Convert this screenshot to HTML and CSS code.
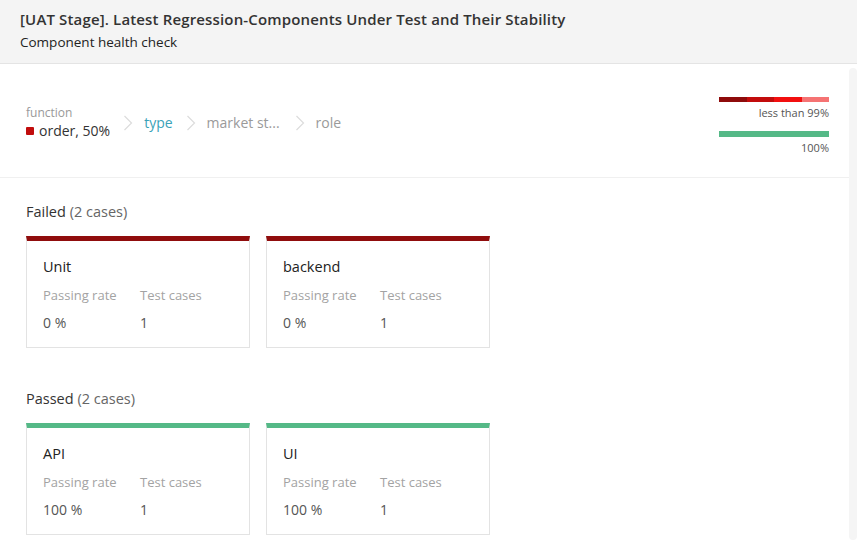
FILE: index.html
```html
<!DOCTYPE html>
<html>
<head>
<meta charset="utf-8">
<link rel="stylesheet" href="styles.css">
</head>
<body>
<header class="header">
  <h1 class="title">[UAT Stage]. Latest Regression-Components Under Test and Their Stability</h1>
  <p class="subtitle">Component health check</p>
</header>
<div class="body-row">
  <main class="main">
    <div class="filter">
      <div class="crumbs">
        <div class="crumb-first">
          <div class="crumb-label">function</div>
          <div class="crumb-value"><span class="dot"></span>order, 50%</div>
        </div>
        <svg class="chev" width="10" height="16" viewBox="0 0 10 16"><path d="M1.5 1 L8.5 8 L1.5 15" fill="none" stroke="#dcdcdc" stroke-width="1.2"/></svg>
        <span class="crumb active">type</span>
        <svg class="chev" width="10" height="16" viewBox="0 0 10 16"><path d="M1.5 1 L8.5 8 L1.5 15" fill="none" stroke="#dcdcdc" stroke-width="1.2"/></svg>
        <span class="crumb">market st...</span>
        <svg class="chev chev-last" width="10" height="16" viewBox="0 0 10 16"><path d="M1.5 1 L8.5 8 L1.5 15" fill="none" stroke="#dcdcdc" stroke-width="1.2"/></svg>
        <span class="crumb">role</span>
      </div>
      <div class="legend">
        <div class="bar bar-red">
          <span class="seg s1"></span><span class="seg s2"></span><span class="seg s3"></span><span class="seg s4"></span>
        </div>
        <div class="legend-text">less than 99%</div>
        <div class="bar bar-green"></div>
        <div class="legend-text">100%</div>
      </div>
    </div>

    <section class="section">
      <h2 class="section-title">Failed <span class="count">(2 cases)</span></h2>
      <div class="cards">
        <div class="card failed">
          <div class="card-title">Unit</div>
          <div class="card-grid">
            <span class="label">Passing rate</span><span class="label">Test cases</span>
            <span class="value">0 %</span><span class="value">1</span>
          </div>
        </div>
        <div class="card failed">
          <div class="card-title">backend</div>
          <div class="card-grid">
            <span class="label">Passing rate</span><span class="label">Test cases</span>
            <span class="value">0 %</span><span class="value">1</span>
          </div>
        </div>
      </div>
    </section>

    <section class="section section-second">
      <h2 class="section-title">Passed <span class="count">(2 cases)</span></h2>
      <div class="cards">
        <div class="card passed">
          <div class="card-title">API</div>
          <div class="card-grid">
            <span class="label">Passing rate</span><span class="label">Test cases</span>
            <span class="value">100 %</span><span class="value">1</span>
          </div>
        </div>
        <div class="card passed">
          <div class="card-title">UI</div>
          <div class="card-grid">
            <span class="label">Passing rate</span><span class="label">Test cases</span>
            <span class="value">100 %</span><span class="value">1</span>
          </div>
        </div>
      </div>
    </section>
  </main>
  <div class="scroll-track"></div>
</div>
</body>
</html>
```

FILE: styles.css
```css
* { box-sizing: border-box; }
html, body { margin: 0; padding: 0; }
body {
  font-family: "Open Sans", "Noto Sans", sans-serif;
  color: #333;
  background: #fff;
  width: 857px;
  height: 544px;
  overflow: hidden;
}
.header {
  background: #f4f4f4;
  border-bottom: 1px solid #e4e4e4;
  height: 64px;
  padding: 8px 20px 0;
}
.title {
  margin: 0;
  font-size: 15px;
  font-weight: 600;
  line-height: 22px;
  letter-spacing: 0.15px;
  color: #333;
}
.subtitle {
  margin: 2px 0 0;
  font-size: 13.5px;
  font-weight: 400;
  line-height: 20px;
  color: #222;
}
.body-row {
  display: flex;
}
.main {
  flex: 1;
}
.scroll-track {
  width: 8px;
  margin-top: 4px;
  height: 472px;
  background: #f5f5f5;
  border-radius: 4px;
}
.filter {
  display: flex;
  justify-content: space-between;
  align-items: flex-start;
  height: 114px;
  padding: 33px 20px 0 26px;
  border-bottom: 1px solid #f0f0f0;
}
.crumbs {
  display: flex;
  align-items: center;
  margin-top: 7px;
}
.crumb-label {
  font-size: 12px;
  line-height: 17px;
  color: #999;
}
.crumb-value {
  display: flex;
  align-items: center;
  font-size: 14px;
  line-height: 20px;
  color: #333;
}
.dot {
  width: 8px;
  height: 8px;
  background: #c10d0d;
  border-radius: 1px;
  margin-right: 5px;
}
.chev {
  margin: 0 11px 0 13px;
}
.chev-last {
  margin-left: 15px;
}
.crumb {
  font-size: 14px;
  line-height: 20px;
  color: #9a9a9a;
}
.crumb.active {
  color: #3aa2b8;
}
.legend {
  width: 110px;
  display: flex;
  flex-direction: column;
  align-items: stretch;
}
.bar { height: 5px; }
.bar-red { display: flex; height: 5px; }
.seg { flex: 1; }
.s1 { background: #8e0b0b; }
.s2 { background: #c20c0c; }
.s3 { background: #f20f0f; }
.s4 { background: #f57373; }
.bar-green {
  background: #55b987;
  margin-top: 10px;
  height: 6px;
}
.legend-text {
  font-size: 11px;
  line-height: 16px;
  margin-top: 3px;
  color: #555;
  text-align: right;
}
.section {
  padding: 24px 26px 0;
}
.section-second {
  padding-top: 41px;
}
.section-title {
  margin: 0;
  font-size: 14.5px;
  font-weight: 400;
  line-height: 20px;
  color: #333;
}
.count { color: #666; }
.cards {
  display: flex;
  gap: 16px;
  margin-top: 14px;
}
.card {
  width: 224px;
  border: 1px solid #e3e3e3;
  border-top: 5px solid #900d0d;
  padding: 16px 16px 14px;
}
.card.passed { border-top-color: #55b987; }
.card-title {
  font-size: 14.5px;
  font-weight: 400;
  line-height: 20px;
  color: #222;
  margin-bottom: 8px;
}
.card-grid {
  display: grid;
  grid-template-columns: 97px auto;
  row-gap: 8px;
}
.label {
  font-size: 13px;
  line-height: 20px;
  color: #a3a3a3;
}
.value {
  font-size: 14px;
  line-height: 20px;
  color: #555;
}
```
